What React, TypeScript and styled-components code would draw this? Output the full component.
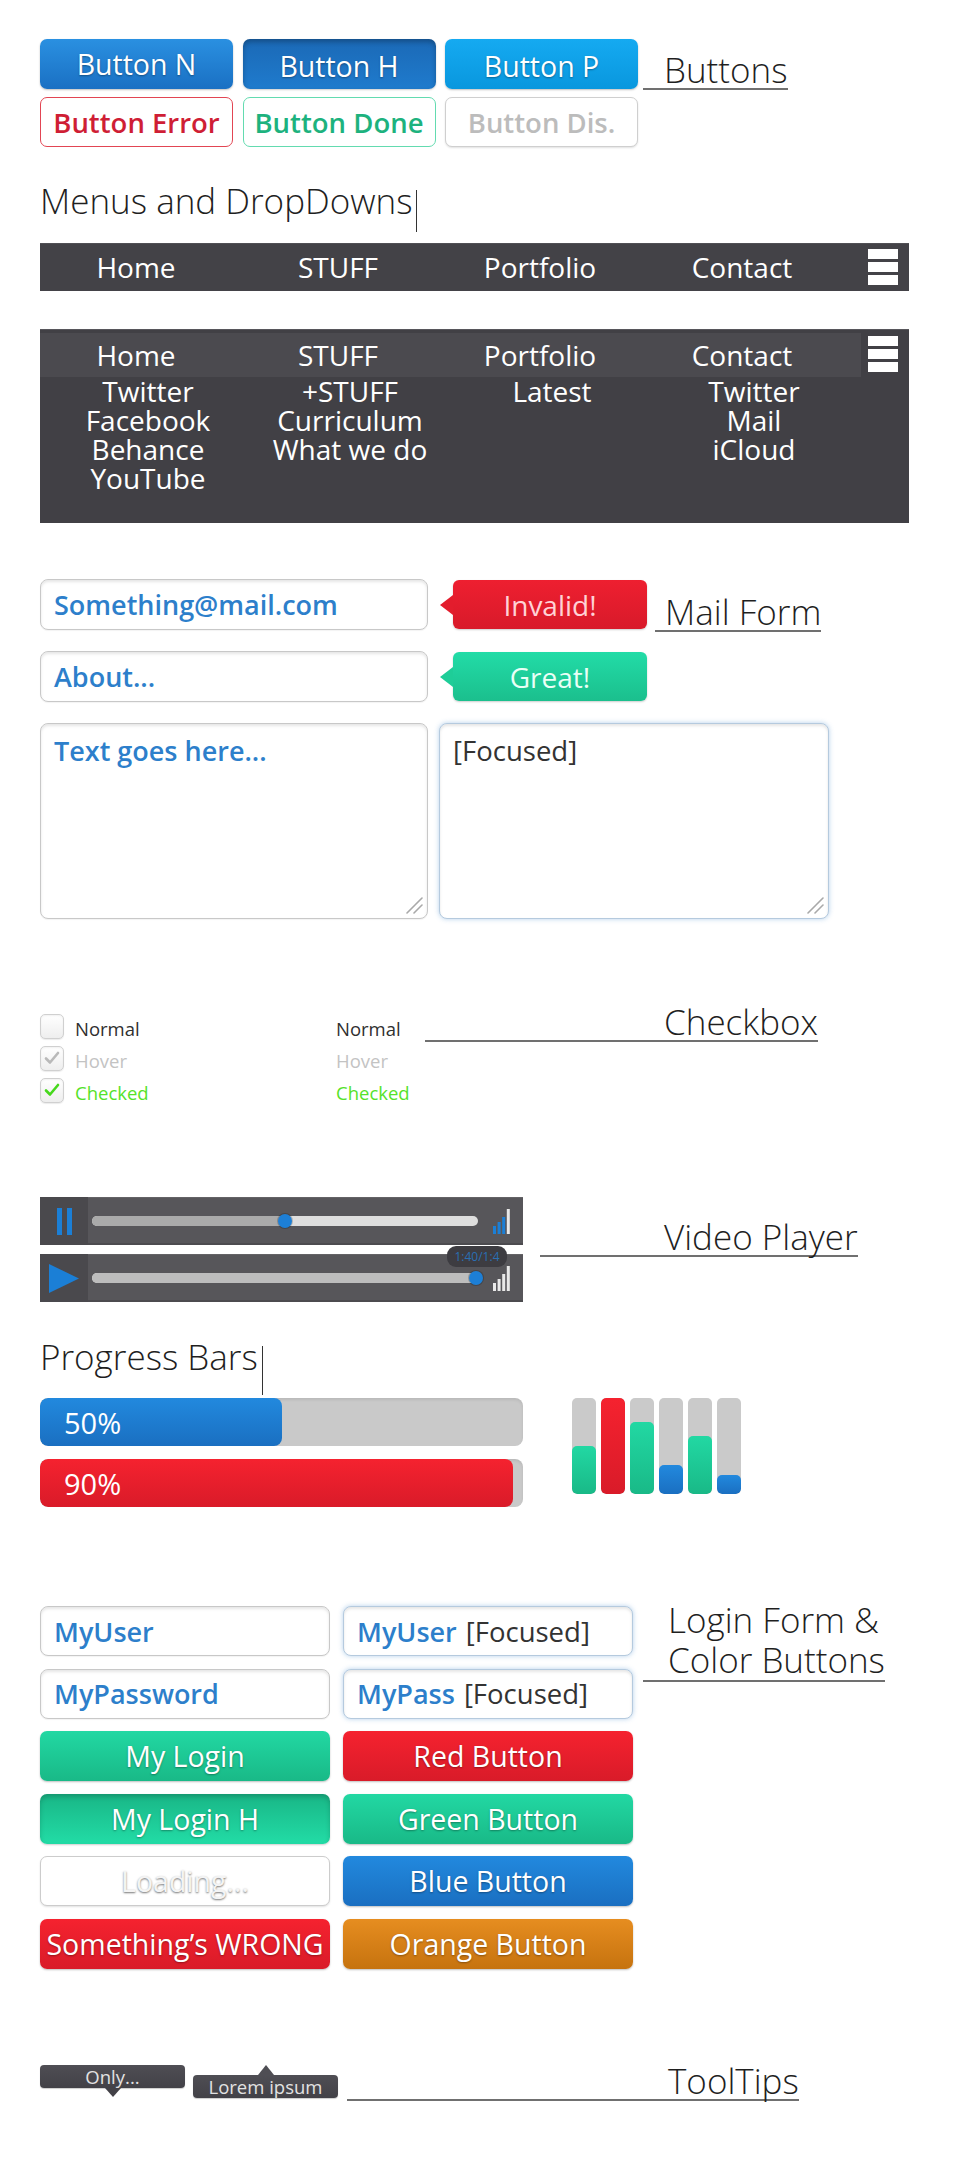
import { Fragment } from "react"
import styled, { createGlobalStyle, css } from "styled-components"

const FONT = `"Open Sans", "Noto Sans", "DejaVu Sans", sans-serif`

const GlobalStyle = createGlobalStyle`
  * {
    box-sizing: border-box;
  }

  html,
  body {
    margin: 0;
    padding: 0;
    background: #ffffff;
  }

  body {
    font-family: ${FONT};
    color: #2a2a2a;
  }
`

const Page = styled.main`
  width: 954px;
  min-height: 2176px;
  padding: 39px 0 0 40px;
`

const Row = styled.section<{ $top?: number }>`
  display: flex;
  align-items: flex-start;
  margin-top: ${(p) => p.$top ?? 0}px;
`

const SideLabel = styled.h2<{ $gap: number; $lead: number; $drop: number; $lh?: number }>`
  margin: ${(p) => p.$drop}px 0 0 ${(p) => p.$gap}px;
  padding-left: ${(p) => p.$lead}px;
  border-bottom: 2px solid #707070;

  font-size: 35px;
  font-weight: 300;
  line-height: ${(p) => p.$lh ?? 36}px;
  color: #1f1f1f;
  white-space: nowrap;
`

const Title = styled.h2<{ $top: number }>`
  display: flex;
  align-items: flex-start;
  margin: ${(p) => p.$top}px 0 0;

  font-size: 35px;
  font-weight: 300;
  line-height: 42px;
  color: #1f1f1f;
`

const Caret = styled.span<{ $len: number }>`
  width: 1px;
  height: ${(p) => p.$len}px;
  margin: 10px 0 0 4px;
  background: #333;
`

/* ---------- buttons ---------- */

type Tone =
  | "normal"
  | "hover"
  | "pressed"
  | "error"
  | "done"
  | "disabled"
  | "green"
  | "greenHover"
  | "red"
  | "blue"
  | "orange"
  | "loading"

const filled = (top: string, bottom: string) => css`
  background: linear-gradient(${top}, ${bottom});
  color: #ffffff;
  text-shadow: 0 1px 2px rgba(0, 0, 0, 0.35);
  box-shadow: 0 1px 2px rgba(0, 0, 0, 0.25);
`

const outlined = (border: string, text: string) => css`
  background: #ffffff;
  border: 1px solid ${border};
  color: ${text};
  font-size: 27.5px;
  font-weight: 600;
`

const tones: Record<Tone, ReturnType<typeof css>> = {
  normal: filled("#2a90e1", "#1a70c3"),
  hover: css`
    ${filled("#1b69b6", "#1f7bcd")}
    padding-top: 4px;
    box-shadow: inset 0 3px 5px rgba(0, 0, 0, 0.25), 0 1px 2px rgba(0, 0, 0, 0.2);
  `,
  pressed: css`
    ${filled("#15aaf1", "#0997de")}
    padding-top: 4px;
  `,
  error: outlined("#e24553", "#cf1e35"),
  done: outlined("#63dbb0", "#1db27e"),
  disabled: css`
    ${outlined("#cfcfcf", "#bcbcbc")}
    box-shadow: 0 1px 2px rgba(0, 0, 0, 0.12);
  `,
  green: filled("#22d8a3", "#19b987"),
  greenHover: css`
    ${filled("#19b686", "#22dca6")}
    box-shadow: inset 0 3px 5px rgba(0, 0, 0, 0.18), 0 1px 2px rgba(0, 0, 0, 0.2);
  `,
  red: filled("#f5222f", "#d91b29"),
  blue: filled("#2289de", "#1a6fc1"),
  orange: filled("#e68d20", "#c6730f"),
  loading: css`
    background: #ffffff;
    border: 1px solid #cccccc;
    color: #f4f4f4;
    text-shadow: 0 1px 2px rgba(0, 0, 0, 0.55);
    box-shadow: 0 1px 2px rgba(0, 0, 0, 0.12);
  `,
}

const Btn = styled.div<{ $tone: Tone }>`
  display: flex;
  align-items: center;
  justify-content: center;
  height: 50px;
  border-radius: 7px;
  font-size: 28.5px;
  white-space: nowrap;
  ${(p) => tones[p.$tone]}
`

const ButtonGrid = styled.div`
  display: grid;
  grid-template-columns: repeat(3, 193px);
  grid-auto-rows: 50px;
  gap: 8px 9.5px;
`

/* ---------- menus ---------- */

const MenuBar = styled.nav`
  display: flex;
  align-items: center;
  width: 869px;
  height: 48px;
  margin-top: 11px;
  background: #434247;
  box-shadow: inset 0 1px 0 rgba(255, 255, 255, 0.08);
`

const MenuGroup = styled.div`
  display: flex;
  margin-left: -5px;
`

const MenuItem = styled.div`
  width: 202px;
  text-align: center;
  color: #ffffff;
  font-size: 28px;
  line-height: 44px;
`

const Burger = styled.div<{ $top?: number }>`
  display: flex;
  flex-direction: column;
  gap: 3px;
  width: 30px;
  margin: ${(p) => p.$top ?? 0}px 11px 0 auto;
`

const BurgerBar = styled.span`
  height: 10px;
  background: #ffffff;
`

const DropPanel = styled.nav`
  width: 869px;
  height: 194px;
  margin-top: 38px;
  padding-top: 3px;
  border-top: 1px solid #57565b;
  background: #414045;
`

const PanelHead = styled.div`
  display: flex;
  align-items: flex-start;
`

const HeadBand = styled.div`
  display: flex;
  align-items: center;
  width: 821px;
  height: 44px;
  background: #4b4a4f;
`

const DropColumns = styled.div`
  display: flex;
`

const DropList = styled.ul`
  width: 202px;
  margin: 0;
  padding: 0 0 0 14px;
  list-style: none;
  text-align: center;
  color: #ffffff;
  font-size: 28px;
  line-height: 29px;
`

/* ---------- mail form ---------- */

const MailGrid = styled.div`
  display: grid;
  grid-template-columns: 388px 390px;
  grid-template-rows: 51px 51px 196px;
  gap: 21px 11px;
  margin-top: 56px;
`

const Field = styled.div<{ $focused?: boolean; $multiline?: boolean }>`
  position: relative;
  display: flex;
  align-items: ${(p) => (p.$multiline ? "flex-start" : "center")};
  padding: ${(p) => (p.$multiline ? "8px 13px" : "0 13px")};
  border: 1px solid ${(p) => (p.$focused ? "#b5cade" : "#c8c8c8")};
  border-radius: 8px;
  background: #ffffff;
  box-shadow: inset 0 2px 3px rgba(0, 0, 0, 0.1)
    ${(p) => (p.$focused ? ", 0 0 5px rgba(90, 150, 210, 0.45)" : ", 0 1px 1px rgba(0, 0, 0, 0.05)")};

  font-size: 27px;
  font-weight: 600;
  color: #2d7fcb;
  white-space: nowrap;
`

const FieldNote = styled.span<{ $gap?: number }>`
  margin-left: ${(p) => p.$gap ?? 0}px;
  font-size: 27.5px;
  font-weight: 400;
  color: #333333;
`

const Grip = styled.svg`
  position: absolute;
  right: 4px;
  bottom: 4px;
`

const BadgeRow = styled.div`
  display: flex;
  align-items: flex-start;
`

const Badge = styled.div<{ $tone: "red" | "green" }>`
  position: relative;
  display: flex;
  align-items: center;
  justify-content: center;
  width: 194px;
  height: 49px;
  margin: 1px 0 0 14px;
  border-radius: 6px;
  font-size: 28px;
  box-shadow: 0 1px 2px rgba(0, 0, 0, 0.2);
  ${(p) =>
    p.$tone === "red"
      ? css`
          background: linear-gradient(#ee1f30, #d81a2a);
          color: #ffd2d6;
        `
      : css`
          background: linear-gradient(#22dca7, #1bbf8d);
          color: #e9fff6;
        `}

  &::before {
    content: "";
    position: absolute;
    left: -13px;
    top: 50%;
    margin-top: -10px;
    border-style: solid;
    border-width: 10px 13px 10px 0;
    border-color: transparent ${(p) => (p.$tone === "red" ? "#e31d2d" : "#1ecd98")} transparent transparent;
  }
`

/* ---------- checkboxes ---------- */

type CheckState = "normal" | "hover" | "checked"

const checkColors: Record<CheckState, string> = {
  normal: "#2f2f2f",
  hover: "#c3c3c3",
  checked: "#55e22a",
}

const CheckGrid = styled.div`
  display: grid;
  grid-template-columns: 24px 250px 89px;
  grid-auto-rows: 26px;
  gap: 6px 11px;
  align-items: center;
`

const CheckBox = styled.span`
  display: flex;
  align-items: center;
  justify-content: center;
  width: 24px;
  height: 25px;
  border: 1px solid #d0d0d0;
  border-radius: 5px;
  background: linear-gradient(#ffffff, #eeeeee);
  box-shadow: inset 0 1px 2px rgba(0, 0, 0, 0.06), 0 1px 1px rgba(0, 0, 0, 0.08);
`

const CheckText = styled.span<{ $state: CheckState }>`
  padding-top: 5px;
  font-size: 18.5px;
  line-height: 26px;
  color: ${(p) => checkColors[p.$state]};
`

/* ---------- video player ---------- */

const PlayerStack = styled.div`
  display: flex;
  flex-direction: column;
  gap: 9px;
`

const Player = styled.div`
  position: relative;
  display: flex;
  align-items: center;
  width: 483px;
  height: 48px;
  background: #57565a;
  box-shadow: inset 0 1px 0 rgba(255, 255, 255, 0.08), inset 0 -2px 0 rgba(0, 0, 0, 0.12);
`

const PlayerControl = styled.div`
  display: flex;
  align-items: center;
  justify-content: center;
  width: 48px;
  height: 100%;
  background: #4a494d;
`

const Track = styled.div`
  position: relative;
  width: 386px;
  height: 10px;
  margin-left: 4px;
  border-radius: 5px;
  background: #dedede;
`

const TrackFill = styled.div<{ $done?: boolean }>`
  height: 100%;
  border-radius: 5px;
  background: ${(p) => (p.$done ? "#bdbdbd" : "#aaaaaa")};
`

const Knob = styled.span`
  position: absolute;
  top: -2px;
  width: 14px;
  height: 14px;
  margin-left: -7px;
  border-radius: 50%;
  background: #1d7fd6;
  box-shadow: 0 0 0 1px rgba(0, 0, 0, 0.2);
`

const Volume = styled.svg`
  margin-left: 15px;
`

const TimeTip = styled.span`
  position: absolute;
  left: 407px;
  top: -8px;
  width: 60px;
  height: 21px;
  overflow: hidden;
  border-radius: 9px;
  background: #3d3c41;
  color: #2a6fb3;
  font-size: 12px;
  line-height: 21px;
  text-align: center;
  white-space: nowrap;
`

/* ---------- progress ---------- */

const ProgressStack = styled.div`
  display: flex;
  flex-direction: column;
  gap: 13px;
`

const ProgressTrack = styled.div`
  width: 483px;
  height: 48px;
  overflow: hidden;
  border-radius: 8px;
  background: #c9c9c9;
  box-shadow: inset 0 2px 3px rgba(0, 0, 0, 0.08);
`

const ProgressFill = styled.div<{ $tone: "blue" | "red" }>`
  display: flex;
  align-items: center;
  height: 100%;
  padding-left: 24px;
  border-radius: 8px;
  background: ${(p) =>
    p.$tone === "blue" ? "linear-gradient(#2289de, #1a6fc1)" : "linear-gradient(#f5222f, #d91b29)"};
  color: #ffffff;
  font-size: 29px;
`

const MiniBars = styled.div`
  display: flex;
  gap: 5px;
  margin-left: 49px;
`

const MiniBar = styled.div`
  display: flex;
  align-items: flex-end;
  width: 24px;
  height: 96px;
  overflow: hidden;
  border-radius: 5px;
  background: #cacaca;
`

const miniColors = {
  green: "linear-gradient(#22d8a3, #19b987)",
  red: "linear-gradient(#f5222f, #d91b29)",
  blue: "linear-gradient(#2289de, #1a6fc1)",
}

const MiniFill = styled.div<{ $tone: keyof typeof miniColors }>`
  width: 100%;
  border-radius: 5px;
  background: ${(p) => miniColors[p.$tone]};
`

/* ---------- login ---------- */

const LoginGrid = styled.div`
  display: grid;
  grid-template-columns: repeat(2, 290px);
  grid-auto-rows: 50px;
  gap: 12.6px 13px;
`

/* ---------- tooltips ---------- */

const Tip = styled.div<{ $arrow: "down" | "up"; $gap?: number; $drop?: number }>`
  position: relative;
  width: 145px;
  height: 23px;
  margin: ${(p) => p.$drop ?? 0}px 0 0 ${(p) => p.$gap ?? 0}px;
  border-radius: 4px;
  background: linear-gradient(#4f4e54, #424147);
  color: #e2e2e2;
  font-size: 18.5px;
  line-height: 23px;
  text-align: center;
  box-shadow: 0 1px 1px rgba(0, 0, 0, 0.2);

  &::after {
    content: "";
    position: absolute;
    left: 50%;
    margin-left: -8px;
    border-style: solid;
    ${(p) =>
      p.$arrow === "down"
        ? css`
            top: 100%;
            border-width: 9px 8px 0 8px;
            border-color: #424147 transparent transparent transparent;
          `
        : css`
            bottom: 100%;
            border-width: 0 8px 10px 8px;
            border-color: transparent transparent #4f4e54 transparent;
          `}
  }
`

/* ---------- small drawings ---------- */

const CheckMark = ({ color }: { color: string }) => (
  <svg width="16" height="14" viewBox="0 0 16 14">
    <path d="M2 7.5 L6 11.5 L14 2" fill="none" stroke={color} strokeWidth="2.6" strokeLinecap="round" strokeLinejoin="round" />
  </svg>
)

const VolumeIcon = ({ level, color }: { level: number; color: string }) => (
  <Volume width="17" height="25" viewBox="0 0 17 25">
    {[8, 12, 17, 25].map((h, i) => (
      <rect key={i} x={i * 4.6} y={25 - h} width="3" height={h} fill={i < level ? color : "#e8e8e8"} />
    ))}
  </Volume>
)

const ResizeGrip = () => (
  <Grip width="20" height="20" viewBox="0 0 20 20">
    <path d="M4 19 L19 4 M11 19 L19 11" stroke="#a9a9a9" strokeWidth="1.6" strokeLinecap="round" />
  </Grip>
)

const BurgerIcon = ({ top }: { top?: number }) => (
  <Burger $top={top}>
    <BurgerBar />
    <BurgerBar />
    <BurgerBar />
  </Burger>
)

const menu = ["Home", "STUFF", "Portfolio", "Contact"]
const drops = [
  ["Twitter", "Facebook", "Behance", "YouTube"],
  ["+STUFF", "Curriculum", "What we do"],
  ["Latest"],
  ["Twitter", "Mail", "iCloud"],
]

const checks: { state: CheckState; label: string }[] = [
  { state: "normal", label: "Normal" },
  { state: "hover", label: "Hover" },
  { state: "checked", label: "Checked" },
]

const minis: { tone: keyof typeof miniColors; pct: number }[] = [
  { tone: "green", pct: 50 },
  { tone: "red", pct: 100 },
  { tone: "green", pct: 75 },
  { tone: "blue", pct: 30 },
  { tone: "green", pct: 60 },
  { tone: "blue", pct: 20 },
]

export default function App() {
  return (
    <Page>
      <GlobalStyle />

      <Row>
        <ButtonGrid>
          <Btn $tone="normal">Button N</Btn>
          <Btn $tone="hover">Button H</Btn>
          <Btn $tone="pressed">Button P</Btn>
          <Btn $tone="error">Button Error</Btn>
          <Btn $tone="done">Button Done</Btn>
          <Btn $tone="disabled">Button Dis.</Btn>
        </ButtonGrid>
        <SideLabel $gap={5} $lead={21} $drop={13}>
          Buttons
        </SideLabel>
      </Row>

      <Title $top={33}>
        Menus and DropDowns
        <Caret $len={42} />
      </Title>

      <MenuBar>
        <MenuGroup>
          {menu.map((m) => (
            <MenuItem key={m}>{m}</MenuItem>
          ))}
        </MenuGroup>
        <BurgerIcon />
      </MenuBar>

      <DropPanel>
        <PanelHead>
          <HeadBand>
            <MenuGroup>
              {menu.map((m) => (
                <MenuItem key={m}>{m}</MenuItem>
              ))}
            </MenuGroup>
          </HeadBand>
          <BurgerIcon top={3} />
        </PanelHead>
        <DropColumns>
          {drops.map((list, i) => (
            <DropList key={i}>
              {list.map((item) => (
                <li key={item}>{item}</li>
              ))}
            </DropList>
          ))}
        </DropColumns>
      </DropPanel>

      <MailGrid>
        <Field>Something@mail.com</Field>
        <BadgeRow>
          <Badge $tone="red">Invalid!</Badge>
          <SideLabel $gap={8} $lead={10} $drop={15}>
            Mail Form
          </SideLabel>
        </BadgeRow>
        <Field>About...</Field>
        <BadgeRow>
          <Badge $tone="green">Great!</Badge>
        </BadgeRow>
        <Field $multiline>
          Text goes here...
          <ResizeGrip />
        </Field>
        <Field $multiline $focused>
          <FieldNote>[Focused]</FieldNote>
          <ResizeGrip />
        </Field>
      </MailGrid>

      <Row $top={94}>
        <CheckGrid>
          {checks.map((c) => (
            <Fragment key={c.state}>
              <CheckBox>
                {c.state === "hover" && <CheckMark color="#b9b9b9" />}
                {c.state === "checked" && <CheckMark color="#46d81c" />}
              </CheckBox>
              <CheckText $state={c.state}>{c.label}</CheckText>
              <CheckText $state={c.state}>{c.label}</CheckText>
            </Fragment>
          ))}
        </CheckGrid>
        <SideLabel $gap={0} $lead={239} $drop={-9}>
          Checkbox
        </SideLabel>
      </Row>

      <Row $top={94}>
        <PlayerStack>
          <Player>
            <PlayerControl>
              <svg width="15" height="27" viewBox="0 0 15 27">
                <rect x="0" y="0" width="5" height="27" fill="#1b7fd6" />
                <rect x="10" y="0" width="5" height="27" fill="#1b7fd6" />
              </svg>
            </PlayerControl>
            <Track>
              <TrackFill style={{ width: "50%" }} />
              <Knob style={{ left: "50%" }} />
            </Track>
            <VolumeIcon level={3} color="#1b7fd6" />
          </Player>
          <Player>
            <PlayerControl>
              <svg width="30" height="29" viewBox="0 0 30 29">
                <polygon points="0,0 30,14.5 0,29" fill="#1b7fd6" />
              </svg>
            </PlayerControl>
            <Track>
              <TrackFill $done style={{ width: "99%" }} />
              <Knob style={{ left: "99.5%" }} />
            </Track>
            <VolumeIcon level={0} color="#1b7fd6" />
            <TimeTip>1:40/1:4</TimeTip>
          </Player>
        </PlayerStack>
        <SideLabel $gap={17} $lead={124} $drop={22}>
          Video Player
        </SideLabel>
      </Row>

      <Title $top={34}>
        Progress Bars
        <Caret $len={49} />
      </Title>

      <Row $top={3}>
        <ProgressStack>
          <ProgressTrack>
            <ProgressFill $tone="blue" style={{ width: "50%" }}>
              50%
            </ProgressFill>
          </ProgressTrack>
          <ProgressTrack>
            <ProgressFill $tone="red" style={{ width: "98%" }}>
              90%
            </ProgressFill>
          </ProgressTrack>
        </ProgressStack>
        <MiniBars>
          {minis.map((m, i) => (
            <MiniBar key={i}>
              <MiniFill $tone={m.tone} style={{ height: `${m.pct}%` }} />
            </MiniBar>
          ))}
        </MiniBars>
      </Row>

      <Row $top={99}>
        <LoginGrid>
          <Field>MyUser</Field>
          <Field $focused>
            MyUser<FieldNote $gap={9}>[Focused]</FieldNote>
          </Field>
          <Field>MyPassword</Field>
          <Field $focused>
            MyPass<FieldNote $gap={9}>[Focused]</FieldNote>
          </Field>
          <Btn $tone="green">My Login</Btn>
          <Btn $tone="red">Red Button</Btn>
          <Btn $tone="greenHover">My Login H</Btn>
          <Btn $tone="green">Green Button</Btn>
          <Btn $tone="loading">Loading...</Btn>
          <Btn $tone="blue">Blue Button</Btn>
          <Btn $tone="red">Something’s WRONG</Btn>
          <Btn $tone="orange">Orange Button</Btn>
        </LoginGrid>
        <SideLabel $gap={10} $lead={25} $drop={-6} $lh={40}>
          Login Form &amp;
          <br />
          Color Buttons
        </SideLabel>
      </Row>

      <Row $top={96}>
        <Tip $arrow="down">Only...</Tip>
        <Tip $arrow="up" $gap={8} $drop={10}>
          Lorem ipsum
        </Tip>
        <SideLabel $gap={9} $lead={321} $drop={-2}>
          ToolTips
        </SideLabel>
      </Row>
    </Page>
  )
}
